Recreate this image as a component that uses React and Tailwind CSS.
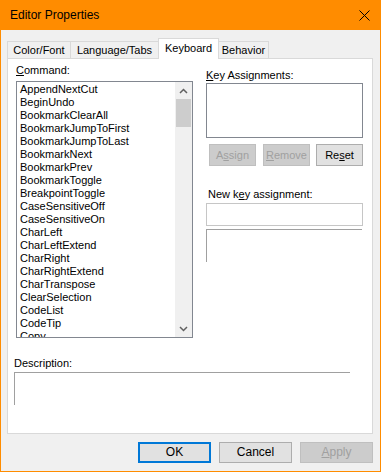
const commands = [
  "AppendNextCut",
  "BeginUndo",
  "BookmarkClearAll",
  "BookmarkJumpToFirst",
  "BookmarkJumpToLast",
  "BookmarkNext",
  "BookmarkPrev",
  "BookmarkToggle",
  "BreakpointToggle",
  "CaseSensitiveOff",
  "CaseSensitiveOn",
  "CharLeft",
  "CharLeftExtend",
  "CharRight",
  "CharRightExtend",
  "CharTranspose",
  "ClearSelection",
  "CodeList",
  "CodeTip",
  "Copy",
];

const tabs = [
  { label: "Color/Font", width: "w-[64px]" },
  { label: "Language/Tabs", width: "w-[89px]" },
  { label: "Keyboard", width: "w-[61px]", active: true },
  { label: "Behavior", width: "w-[51px]" },
];

const Tab = ({ label, width, active }) =>
  active ? (
    <div
      className={`${width} h-[21px] -mb-px -ml-px relative z-10 flex items-start justify-center pt-[3px] bg-white border border-b-0 border-[#d9d9d9]`}
    >
      {label}
    </div>
  ) : (
    <div
      className={`${width} h-[17px] -ml-px first:ml-0 flex items-start justify-center pt-[2px] bg-[#f0f0f0] border border-b-0 border-[#d9d9d9]`}
    >
      {label}
    </div>
  );

const SmallButton = ({ children, disabled, className = "" }) => (
  <button
    type="button"
    className={`w-[47px] h-[22px] border text-[11px] ${
      disabled
        ? "bg-[#cccccc] border-[#bfbfbf] text-[#a0a0a0]"
        : "bg-[#e1e1e1] border-[#adadad] text-black"
    } ${className}`}
  >
    {children}
  </button>
);

const CommandList = () => (
  <div className="w-[177px] h-[257px] mt-[4px] border border-[#828790] bg-white flex overflow-hidden">
    <div className="flex-1 pl-[3px] pt-[1px] overflow-hidden">
      {commands.map((c) => (
        <div key={c} className="h-[13px] leading-[13px] whitespace-nowrap">
          {c}
        </div>
      ))}
    </div>
    <div className="w-[17px] bg-[#f0f0f0] flex flex-col">
      <div className="h-[17px] flex items-center justify-center">
        <svg width="9" height="6" viewBox="0 0 9 6">
          <path d="M1 5 L4.5 1.5 L8 5" fill="none" stroke="#606060" strokeWidth="1.5" />
        </svg>
      </div>
      <div className="h-[28px] mx-px bg-[#cdcdcd]" />
      <div className="flex-1" />
      <div className="h-[17px] flex items-center justify-center">
        <svg width="9" height="6" viewBox="0 0 9 6">
          <path d="M1 1 L4.5 4.5 L8 1" fill="none" stroke="#606060" strokeWidth="1.5" />
        </svg>
      </div>
    </div>
  </div>
);

export default function App() {
  return (
    <div
      className="w-[381px] h-[472px] border border-[#ff8c00] bg-[#f0f0f0] flex flex-col text-[11px] leading-[13px] text-black"
      style={{ fontFamily: '"Liberation Sans", Arial, sans-serif' }}
    >
      <div className="h-[30px] -mt-px -mx-px bg-[#ff8c00] flex items-center justify-between pl-[10px] pr-[11px]">
        <span className="text-[12px]">Editor Properties</span>
        <svg width="11" height="11" viewBox="0 0 11 11">
          <path d="M0.5 0.5 L10.5 10.5 M10.5 0.5 L0.5 10.5" stroke="#000" strokeWidth="1" />
        </svg>
      </div>

      <div className="pt-[8px] pl-[6px] pr-[7px] flex flex-col">
        <div className="h-[20px] flex items-end">
          {tabs.map((t) => (
            <Tab key={t.label} {...t} />
          ))}
        </div>

        <div className="h-[376px] bg-white border border-[#d9d9d9] flex flex-col">
          <div className="flex">
            <div className="pl-[8px] pt-[5px] flex flex-col">
              <div>
                <u>C</u>ommand:
              </div>
              <CommandList />
            </div>

            <div className="ml-[13px] pt-[10px] flex flex-col w-[157px]">
              <div>
                <u>K</u>ey Assignments:
              </div>
              <div className="mt-px h-[55px] border border-[#828790] bg-white" />
              <div className="mt-[6px] flex pl-[3px]">
                <SmallButton disabled>
                  A<u>s</u>sign
                </SmallButton>
                <SmallButton disabled className="ml-[7px]">
                  <u>R</u>emove
                </SmallButton>
                <SmallButton className="ml-[6px]">
                  Re<u>s</u>et
                </SmallButton>
              </div>
              <div className="mt-[22px] pl-[2px]">
                New k<u>e</u>y assignment:
              </div>
              <div className="mt-[2px] h-[23px] border border-[#c6c6c6] bg-white" />
              <div className="mt-[3px] h-[33px] w-[156px] border-t border-l border-[#a0a0a0]" />
            </div>
          </div>

          <div className="pl-[6px] mt-[19px] flex flex-col">
            <div>Description:</div>
            <div className="mt-[2px] h-[33px] w-[336px] border-t border-l border-[#a0a0a0]" />
          </div>
        </div>

        <div className="mt-[8px] flex justify-end gap-[8px]">
          <button
            type="button"
            className="w-[73px] h-[21px] bg-[#e1e1e1] border-2 border-[#0078d7] text-[12px]"
          >
            OK
          </button>
          <button
            type="button"
            className="w-[73px] h-[21px] bg-[#e1e1e1] border border-[#adadad] text-[12px]"
          >
            Cancel
          </button>
          <button
            type="button"
            className="w-[73px] h-[21px] bg-[#cccccc] border border-[#bfbfbf] text-[#a0a0a0] text-[12px]"
          >
            <u>A</u>pply
          </button>
        </div>
      </div>
    </div>
  );
}
